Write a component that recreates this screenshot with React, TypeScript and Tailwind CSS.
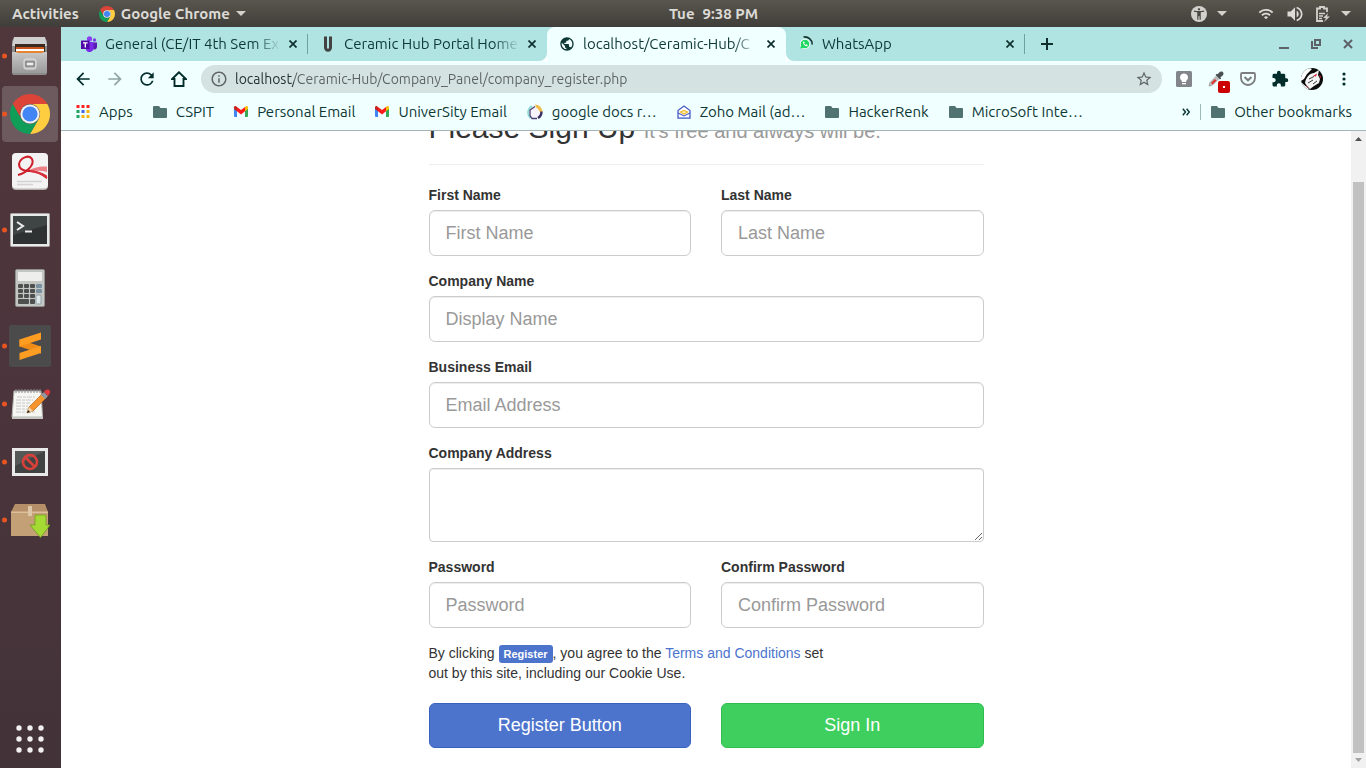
import React from "react";
import {
  MdAccessibilityNew,
  MdArrowBack,
  MdArrowForward,
  MdExtension,
  MdOutlineInfo,
  MdPublic,
  MdRefresh,
  MdStarBorder,
  MdVolumeUp,
  MdWifi,
} from "react-icons/md";

type IconProps = { className?: string };

/* ---------- Icons ---------- */

function ChromeIcon({ className }: IconProps) {
  return (
    <svg viewBox="4 4 40 40" className={className} aria-hidden="true">
      <path fill="#db4437" d="M6.68 14A20 20 0 0 1 41.32 14L24 14A10 10 0 0 0 15.34 29Z" />
      <path fill="#ffcd40" d="M41.32 14A20 20 0 0 1 24 44L32.66 29A10 10 0 0 0 24 14Z" />
      <path fill="#0f9d58" d="M24 44A20 20 0 0 1 6.68 14L15.34 29A10 10 0 0 0 32.66 29Z" />
      <circle cx="24" cy="24" r="9.6" fill="#f1f1f1" />
      <circle cx="24" cy="24" r="7.6" fill="#4285f4" />
    </svg>
  );
}

function CaretDown() {
  return (
    <svg viewBox="0 0 10 5" className="h-[5px] w-2.5" aria-hidden="true">
      <path d="M0 0h10L5 5z" fill="#d3d1cc" />
    </svg>
  );
}

function FilesIcon() {
  return (
    <svg viewBox="0 0 40 40" className="size-10" aria-hidden="true">
      <defs>
        <linearGradient id="cabinet" x1="0" y1="0" x2="0" y2="1">
          <stop offset="0" stopColor="#c9c9c9" />
          <stop offset="1" stopColor="#9a9a9a" />
        </linearGradient>
      </defs>
      <path d="M4 2h31l2 3v32l-1 2H3l-1-2V5z" fill="#8c8c8c" />
      <path d="M4 1h31l2 9H2z" fill="#cfcfcf" />
      <rect x="5" y="8" width="30" height="11" fill="#3b2a20" />
      <rect x="6" y="11" width="28" height="3" fill="#c8541b" />
      <rect x="6" y="13" width="28" height="2" fill="#fff" />
      <rect x="6" y="15" width="28" height="3" fill="#e8832f" />
      <path d="M2 16h4l2 1h24l2-1h3v21H2z" fill="url(#cabinet)" />
      <rect x="14" y="23" width="12" height="10" rx="2" fill="#b9b9b9" stroke="#e4e4e4" />
      <rect x="16" y="26" width="8" height="4" fill="#eee" stroke="#666" />
    </svg>
  );
}

function PdfIcon() {
  return (
    <svg viewBox="0 0 40 40" className="size-10" aria-hidden="true">
      <rect x="2" y="2" width="36" height="36" rx="4" fill="#b5b0b0" />
      <rect x="2" y="1" width="36" height="35.500" rx="4" fill="#f3f3f3" />
      <path d="M16 20C23 15 31 14 37 14.500V20c-7-2-14-1-21 0z" fill="#ec8087" />
      <path d="M8 23C16 21 25 13 22 7 19 2 10 6 9 12c0 6 6 7 11 7 6 .5 11 2 17 7" fill="none" stroke="#cf1f2b" strokeWidth="2" />
      <path d="M20 18.500c6-.5 12 2 17 5V27c-5-4-10-7-17-7z" fill="#d9323d" />
      <path d="M7 29.500h25M7 32.500h16" stroke="#d2d2d2" strokeWidth="1.500" />
    </svg>
  );
}

function TerminalIcon() {
  return (
    <svg viewBox="0 0 40 34" className="h-[34px] w-10" aria-hidden="true">
      <rect x="0.500" y="0.500" width="39" height="33" rx="1" fill="#e9e9e9" stroke="#a7a7a7" />
      <rect x="3" y="3" width="34" height="28" fill="#2e3233" />
      <path d="M3 3h34v9L3 22z" fill="#4b5051" opacity=".6" />
      <path d="M7 9l6 4-6 4" fill="none" stroke="#eee" strokeWidth="2" />
      <path d="M15 18.500h7" stroke="#eee" strokeWidth="2" />
    </svg>
  );
}

function CalculatorIcon() {
  const cols = [3, 9, 15];
  const rows = [15, 20, 25];
  return (
    <svg viewBox="0 0 30 38" className="h-[38px] w-[30px]" aria-hidden="true">
      <rect x="0.500" y="0.500" width="29" height="37" rx="1.500" fill="#c4c6c4" stroke="#8f918f" />
      <rect x="3" y="3" width="24" height="9" rx="1" fill="#eeefec" />
      {rows.map((y) =>
        cols.map((x) => <rect key={`${x}-${y}`} x={x} y={y} width="5" height="4" rx="1" fill="#4e5050" />),
      )}
      <rect x="3" y="30" width="11" height="5" rx="1" fill="#4e5050" />
      <rect x="15" y="30" width="5" height="5" rx="1" fill="#4e5050" />
      <rect x="21" y="15" width="6" height="4" rx="1" fill="#7890a0" />
      <rect x="21" y="20" width="6" height="4" rx="1" fill="#7890a0" />
      <rect x="21" y="26" width="5" height="9" rx="1" fill="#dde6ea" stroke="#8fa0a8" />
    </svg>
  );
}

function SublimeIcon() {
  return (
    <svg viewBox="0 0 42 42" className="size-[42px]" aria-hidden="true">
      <rect width="42" height="42" rx="2" fill="#4b4b4b" />
      <path d="M10.500 14.500L32 21.500V28.500L10.500 21.500z" fill="#f08c16" />
      <path d="M32 7.500L10.500 14.500V21.500L32 14.500z" fill="#ff9c22" />
      <path d="M32 21L10.500 28V35L32 28z" fill="#ff9c22" />
    </svg>
  );
}

function NotesIcon() {
  return (
    <svg viewBox="0 0 40 36" className="h-9 w-10" aria-hidden="true">
      <path d="M4 5h27l1.500 26H2z" fill="#f6f6f3" stroke="#b4b4b0" />
      <path d="M2 31h31v2H2z" fill="#c6c6c2" />
      <path d="M6 3v4M9 3v4M12 3v4M15 3v4M18 3v4M21 3v4M24 3v4M27 3v4M30 3v4" stroke="#8a8a8a" />
      <path
        d="M7 11h18M6 14h17M6 17h14M6 20h12M6 23h12M6 26h20"
        stroke="#c2c2c2"
        strokeWidth=".9"
        strokeDasharray="5 1 3 1"
      />
      <path d="M17 27l2-6L33 7l4 4-14 14z" fill="#f5942c" stroke="#b5651d" strokeWidth=".7" />
      <path d="M17 27l2-6 4 4z" fill="#f1d6a8" />
      <path d="M17 27l1-3 2 2z" fill="#222" />
      <path d="M31 9l3-3 4 4-3 3z" fill="#8d98a3" />
      <path d="M34 6c2-4 7-3 6 1l-2 3z" fill="#e23a3a" />
    </svg>
  );
}

function BlockedIcon() {
  return (
    <svg viewBox="0 0 36 28" className="h-7 w-9" aria-hidden="true">
      <rect width="36" height="28" fill="#e9e9e9" />
      <rect x="3" y="3" width="30" height="22" fill="#414342" />
      <path d="M3 3h30L3 18z" fill="#565857" />
      <circle cx="18" cy="14" r="7" fill="none" stroke="#d9403a" strokeWidth="2.600" />
      <path d="M13 9l10 10" stroke="#d9403a" strokeWidth="2.600" />
    </svg>
  );
}

function PackageIcon() {
  return (
    <svg viewBox="0 0 40 36" className="h-9 w-10" aria-hidden="true">
      <path d="M5 2h30l3 8H1z" fill="#b58f68" />
      <path d="M1 10h37v24H1z" fill="#c4a077" />
      <path d="M1 9.500h37v1.500H1z" fill="#dcc09c" />
      <path d="M18 4h4v10h-4z" fill="#dcc7ab" />
      <path d="M25 13h11v10h4L30.500 35.500 20 23h5z" fill="#a5da35" stroke="#6f9d19" strokeWidth=".8" />
    </svg>
  );
}

function FolderIcon() {
  return (
    <svg viewBox="0 0 14 12" className="h-3 w-3.5" aria-hidden="true">
      <path d="M1 0h5l1.500 2H13a1 1 0 0 1 1 1v8a1 1 0 0 1-1 1H1a1 1 0 0 1-1-1V1a1 1 0 0 1 1-1z" fill="#507371" />
    </svg>
  );
}

function GmailIcon() {
  return (
    <svg viewBox="0 0 14 11" className="h-[11px] w-3.5" aria-hidden="true">
      <path d="M0 2v8a1 1 0 0 0 1 1h2V4z" fill="#4285f4" />
      <path d="M14 2v8a1 1 0 0 1-1 1h-2V4z" fill="#34a853" />
      <path d="M11 1l1-.8c.900-.6 2 0 2 1.100V3l-3 2.300z" fill="#fbbc04" />
      <path d="M3 1L2 .2C1.100-.4 0 .2 0 1.300V3l3 2.300z" fill="#c5221f" />
      <path d="M3 1l4 3.100L11 1v4.300L7 8.400 3 5.300z" fill="#ff1a1a" />
    </svg>
  );
}

function AppsIcon() {
  const colors = ["#f22", "#f22", "#f22", "#1fa463", "#4069e0", "#f6b50c", "#1fa463", "#f6b50c", "#f6b50c"];
  return (
    <svg viewBox="0 0 13 13" className="h-[13px] w-3.5" aria-hidden="true">
      {colors.map((color, i) => (
        <rect key={i} x={(i % 3) * 5} y={Math.floor(i / 3) * 5} width="3" height="3" fill={color} />
      ))}
    </svg>
  );
}

function DocsRingIcon() {
  return (
    <svg viewBox="0 0 16 16" className="size-4" aria-hidden="true">
      <path d="M5 2C0 5 0 11 3.500 14" fill="none" stroke="#8fdcd6" strokeWidth="1.800" />
      <path d="M9 3L5.500 3.500 3 6v6l2 2.500h5l3-3V8z" fill="#f7f4fb" />
      <path d="M8 2.500L3 6v5.500L5 14.500h5" fill="none" stroke="#4a3f73" strokeWidth="1.300" />
      <path d="M8 .5c4 0 7 3 7.500 7L13 8.500C12 6 11 4.500 9 3.500z" fill="#f0bd4a" />
      <path d="M14.500 7.500c0 3-1 5-3.500 6.500" fill="none" stroke="#3a2d63" strokeWidth="2.400" />
    </svg>
  );
}

function ZohoMailIcon() {
  return (
    <svg viewBox="0 0 14 14" className="size-3.5" aria-hidden="true">
      <path d="M1 5.500L7 1l6 4.500V13H1z" fill="#fff" stroke="#4a5fc4" strokeWidth="1.300" />
      <path d="M3.500 7L7 5.500 10.500 7 7 9z" fill="#fff6d8" stroke="#f0b92c" strokeWidth="1.200" />
      <path d="M1 8l6 3 6-3" fill="none" stroke="#4a5fc4" strokeWidth="1.100" />
      <path d="M2 12.500h10" stroke="#8fa2e8" />
    </svg>
  );
}

function TeamsIcon() {
  return (
    <svg viewBox="0 0 16 16" className="size-4" aria-hidden="true">
      <circle cx="13.500" cy="4" r="1.700" fill="#7b3fe4" />
      <circle cx="8.500" cy="2.800" r="2.600" fill="#8a3ff0" />
      <path d="M11 6.500h5v4.500a2.500 2.500 0 0 1-4 2z" fill="#5b1bb5" />
      <path d="M5 6h7.500v6a4 4 0 0 1-7.500 2z" fill="#7a2be8" />
      <rect y="4.500" width="8.500" height="8.500" rx=".6" fill="#5009a8" />
      <path d="M2 6.800h4.600M4.300 6.800v4.700" stroke="#fff" strokeWidth="1.300" />
    </svg>
  );
}

function MagnetIcon() {
  return (
    <svg viewBox="0 0 16 16" className="size-4" aria-hidden="true">
      <path d="M5.500.500v11a2.500 2.700 0 0 0 5 0V.5" fill="none" stroke="#424242" strokeWidth="3" />
    </svg>
  );
}

function WhatsAppLoadingIcon() {
  return (
    <svg viewBox="0 0 16 16" className="size-4" aria-hidden="true">
      <circle cx="7" cy="8" r="5" fill="#fff" />
      <circle cx="7" cy="8" r="4.300" fill="#1ed75f" />
      <path d="M2.300 12.600l.8-3 2.200 2.200z" fill="#1ed75f" />
      <path d="M5 6c0 2.500 2 4.500 4.300 4.300l.4-1.300-1.300-.7-.7.600A3 3 0 0 1 6.100 7.300l.6-.7L6.200 5.300z" fill="#fff" />
      <path d="M5.500 1A7.500 7.500 0 0 1 14.200 8.500" fill="none" stroke="#12302e" strokeWidth="1.600" />
    </svg>
  );
}

function CloseGlyph() {
  return (
    <svg viewBox="0 0 8 8" className="size-2" aria-hidden="true">
      <path d="M.5.500l7 7M7.500.500l-7 7" stroke="#0e2f2d" strokeWidth="1.700" />
    </svg>
  );
}

function HomeIcon() {
  return (
    <svg viewBox="0 0 16 16" className="size-4" aria-hidden="true">
      <path d="M8 1.300L1 8h2.500v7h9V8H15z" fill="none" stroke="#032d2b" strokeWidth="1.900" />
    </svg>
  );
}

function BulbIcon() {
  return (
    <svg viewBox="0 0 16 16" className="size-4" aria-hidden="true">
      <rect width="16" height="16" rx="1.500" fill="#82868b" />
      <path d="M8 2.500a4 4 0 0 0-2.200 7.300V11h4.400V9.800A4 4 0 0 0 8 2.500z" fill="#fff" />
      <rect x="6" y="12" width="4" height="1.300" fill="#fff" />
    </svg>
  );
}

function EyedropperIcon() {
  return (
    <svg viewBox="0 0 16 16" className="size-4" aria-hidden="true">
      <path d="M1 15l1-3.500L8 5.500l2.500 2.500-6 6z" fill="#c4c4c4" stroke="#8b8b8b" strokeWidth=".7" />
      <path d="M3 12l4-4 1.500 1.500-4 4z" fill="#e03030" />
      <path d="M7.500 4l4.500 4.500 1.200-1.200-.9-.9C15 4.500 16 3.500 15.300 1.800 14.300-.200 12 .400 10.500 2.300l-.9 1L8.700 2.700z" fill="#4a4f52" />
    </svg>
  );
}

function PocketIcon() {
  return (
    <svg viewBox="0 0 16 14" className="h-3.5 w-4" aria-hidden="true">
      <path d="M1 2.200C1 1.500 1.500 1 2.200 1h11.600c.7 0 1.200.5 1.200 1.200V6A7 7 0 0 1 1 6z" fill="none" stroke="#7d7d7d" strokeWidth="1.800" />
      <path d="M4.500 5L8 8.300 11.500 5" fill="none" stroke="#7d7d7d" strokeWidth="2" />
    </svg>
  );
}

function ProfileAvatar() {
  return (
    <svg viewBox="0 0 22 22" className="size-[22px]" aria-hidden="true">
      <defs>
        <clipPath id="avatar">
          <circle cx="11" cy="11" r="11" />
        </clipPath>
      </defs>
      <g clipPath="url(#avatar)">
        <rect width="22" height="22" fill="#0b0b0b" />
        <path d="M0 5C3 0 8-1 11 1L6 6 3 11l-3 2z" fill="#fff" />
        <path d="M4 15c1-6 5-10 9-10l5-3-1 5 2 4-1 4-5 3-4 3-3-3z" fill="#f4f4f4" />
        <path d="M8 11l5-2.500M7 15l5-3M12 16l4-3" stroke="#222" strokeWidth=".9" />
        <path d="M12 8l4-2.500-1 3zM4 19l2.500-1 .5 1.500zM18 7l1.300 3.500.7-2z" fill="#e0203c" />
        <path d="M1 15l7 6-2 1-6-5z" fill="#fff" />
      </g>
    </svg>
  );
}

function BatteryIcon() {
  return (
    <svg viewBox="0 0 14 16" className="h-4 w-3.5" aria-hidden="true">
      <path d="M7 15H1V2.500h3V1h4v1.500h3V6" fill="none" stroke="#d3d1cc" strokeWidth="1.800" />
      <path d="M3 7.500h6M3 10h4M3 12.500h3" stroke="#d3d1cc" strokeWidth="1.500" />
      <path d="M12 7l-5 5h3l-2 4 6-5.500h-3z" fill="#d3d1cc" />
    </svg>
  );
}

/* ---------- Desktop shell ---------- */

function TopBar() {
  return (
    <header className="grid h-[27px] shrink-0 grid-cols-[61px_1fr_auto_1fr] items-center bg-linear-to-b from-[#59564e] to-[#403e3a] font-bold text-[#dcdad5]">
      <div className="col-span-2 flex items-center gap-5 pl-3">
        <button type="button">Activities</button>
        <button type="button" className="flex items-center gap-1.5">
          <ChromeIcon className="size-4" />
          Google Chrome
          <CaretDown />
        </button>
      </div>
      <time className="flex gap-2">
        <span>Tue</span>
        <span>9:38 PM</span>
      </time>
      <div className="flex items-center justify-end gap-[11px] pr-[15px]">
        <button type="button" aria-label="Accessibility" className="mr-5 flex items-center gap-2.5">
          <span className="flex size-4 items-center justify-center rounded-full bg-[#d3d1cc] text-[#4a4842]">
            <MdAccessibilityNew className="size-3.5" />
          </span>
          <CaretDown />
        </button>
        <MdWifi className="size-4" />
        <MdVolumeUp className="size-5" />
        <BatteryIcon />
        <CaretDown />
      </div>
    </header>
  );
}

const launchers: { name: string; icon: React.ReactNode; running?: boolean; active?: boolean }[] = [
  { name: "Files", icon: <FilesIcon />, running: true },
  { name: "Google Chrome", icon: <ChromeIcon className="size-10" />, running: true, active: true },
  { name: "Document Viewer", icon: <PdfIcon /> },
  { name: "Terminal", icon: <TerminalIcon />, running: true },
  { name: "Calculator", icon: <CalculatorIcon /> },
  { name: "Sublime Text", icon: <SublimeIcon />, running: true },
  { name: "Text Editor", icon: <NotesIcon />, running: true },
  { name: "Screen Blocker", icon: <BlockedIcon />, running: true },
  { name: "Package Installer", icon: <PackageIcon />, running: true },
];

function Dock() {
  return (
    <nav
      aria-label="Dock"
      className="flex w-[61px] shrink-0 flex-col gap-0.5 bg-linear-to-b from-[#50373b] via-[#4b343c] to-[#423338] py-px pl-0.5"
    >
      {launchers.map(({ name, icon, running, active }) => (
        <button
          key={name}
          type="button"
          aria-label={name}
          className={`relative flex size-14 shrink-0 items-center justify-center rounded ${active ? "bg-[#6d5a5e]" : ""}`}
        >
          {running && <span className="absolute top-1/2 left-0 size-[5px] -translate-y-1/2 rounded-full bg-[#e95420]" />}
          {icon}
        </button>
      ))}
      <button type="button" aria-label="Show Applications" className="mt-auto flex size-14 items-center justify-center">
        <svg viewBox="0 0 28 28" className="size-7" aria-hidden="true">
          {[3, 14, 25].map((y) => [3, 14, 25].map((x) => <circle key={`${x}-${y}`} cx={x} cy={y} r="2.700" fill="#f2f0f0" />))}
        </svg>
      </button>
    </nav>
  );
}

/* ---------- Browser chrome ---------- */

function Tab({ icon, title, active }: { icon: React.ReactNode; title: string; active?: boolean }) {
  return (
    <div
      className={`flex h-full w-[239px] items-center gap-2 pr-[11px] pl-3 ${active ? "rounded-t-lg bg-[#f0ffff]" : ""}`}
    >
      {icon}
      <span className="min-w-0 flex-1 overflow-hidden mask-r-from-85% whitespace-nowrap">{title}</span>
      <button type="button" aria-label={`Close ${title}`}>
        <CloseGlyph />
      </button>
    </div>
  );
}

function TabStrip() {
  return (
    <div className="flex h-[34px] shrink-0 text-[#0d3835]">
      <div className="flex items-center rounded-br-lg bg-[#b0e4e2] pl-2">
        <Tab icon={<TeamsIcon />} title="General (CE/IT 4th Sem Ex" />
        <span className="-ml-px h-5 w-px bg-[#6da09e]" />
        <Tab icon={<MagnetIcon />} title="Ceramic Hub Portal Home" />
      </div>
      <div className="bg-[#b0e4e2]">
        <Tab active icon={<MdPublic className="size-4" />} title="localhost/Ceramic-Hub/C" />
      </div>
      <div className="flex flex-1 items-center rounded-bl-lg bg-[#b0e4e2]">
        <Tab icon={<WhatsAppLoadingIcon />} title="WhatsApp" />
        <span className="-ml-px h-5 w-px bg-[#6da09e]" />
        <button type="button" aria-label="New tab" className="ml-4">
          <svg viewBox="0 0 12 12" className="size-3" aria-hidden="true">
            <path d="M6 0v12M0 6h12" stroke="#0e2f2d" strokeWidth="2" />
          </svg>
        </button>
        <div className="ml-auto flex items-center gap-[22px] pr-[13px]">
          <button type="button" aria-label="Minimize">
            <svg viewBox="0 0 10 10" className="size-2.5" aria-hidden="true">
              <path d="M0 9h10" stroke="#5c6268" strokeWidth="2" />
            </svg>
          </button>
          <button type="button" aria-label="Restore">
            <svg viewBox="0 0 10 10" className="size-2.5" aria-hidden="true">
              <path d="M4 1h5v5H4zM1 2v7h6" fill="none" stroke="#5c6268" strokeWidth="2" />
            </svg>
          </button>
          <button type="button" aria-label="Close window">
            <svg viewBox="0 0 10 10" className="size-2.5" aria-hidden="true">
              <path d="M1 1l8 8M9 1L1 9" stroke="#5c6268" strokeWidth="2" />
            </svg>
          </button>
        </div>
      </div>
    </div>
  );
}

function ToolButton({ label, children }: { label: string; children: React.ReactNode }) {
  return (
    <button
      type="button"
      aria-label={label}
      className="relative flex size-8 shrink-0 items-center justify-center text-[#032d2b]"
    >
      {children}
    </button>
  );
}

function Toolbar() {
  return (
    <div className="flex h-9 shrink-0 items-center bg-[#f0ffff] px-1.5">
      <ToolButton label="Back">
        <MdArrowBack className="size-5" />
      </ToolButton>
      <ToolButton label="Forward">
        <MdArrowForward className="size-5 text-[#8fa5a4]" />
      </ToolButton>
      <ToolButton label="Reload">
        <MdRefresh className="size-5" />
      </ToolButton>
      <ToolButton label="Home">
        <HomeIcon />
      </ToolButton>
      <div className="mx-1.5 flex h-7 flex-1 items-center gap-[7px] rounded-full bg-[#d5e2e2] px-[9px] text-[#5f6566]">
        <MdOutlineInfo className="size-[18px] shrink-0" />
        <input
          aria-label="Address"
          defaultValue="localhost/Ceramic-Hub/Company_Panel/company_register.php"
          className="min-w-0 flex-1 bg-[linear-gradient(90deg,#1d2f2e_59px,#5a6162_59px)] bg-clip-text text-sm text-transparent outline-none"
        />
        <MdStarBorder className="size-[18px] shrink-0" />
      </div>
      <ToolButton label="Keep">
        <BulbIcon />
      </ToolButton>
      <ToolButton label="Color picker">
        <EyedropperIcon />
        <span className="absolute right-0.5 bottom-0.5 flex size-3 items-center justify-center rounded-xs bg-[#cc0000]">
          <span className="size-0.5 bg-white" />
        </span>
      </ToolButton>
      <ToolButton label="Save to Pocket">
        <PocketIcon />
      </ToolButton>
      <ToolButton label="Extensions">
        <MdExtension className="size-[18px]" />
      </ToolButton>
      <ToolButton label="Profile">
        <ProfileAvatar />
      </ToolButton>
      <ToolButton label="Menu">
        <svg viewBox="0 0 4 14" className="h-3.5 w-1" aria-hidden="true">
          <circle cx="2" cy="2" r="1.600" fill="currentColor" />
          <circle cx="2" cy="7" r="1.600" fill="currentColor" />
          <circle cx="2" cy="12" r="1.600" fill="currentColor" />
        </svg>
      </ToolButton>
    </div>
  );
}

const bookmarks = [
  { icon: <AppsIcon />, name: "Apps" },
  { icon: <FolderIcon />, name: "CSPIT" },
  { icon: <GmailIcon />, name: "Personal Email" },
  { icon: <GmailIcon />, name: "UniverSity Email" },
  { icon: <DocsRingIcon />, name: "google docs r…" },
  { icon: <ZohoMailIcon />, name: "Zoho Mail (ad…" },
  { icon: <FolderIcon />, name: "HackerRenk" },
  { icon: <FolderIcon />, name: "MicroSoft Inte…" },
];

function BookmarksBar() {
  return (
    <div className="flex h-[34px] shrink-0 items-center border-b border-[#a3b5b5] bg-[#f0ffff] pr-3.5 pb-1 pl-[15px] whitespace-nowrap text-[#0d3835]">
      <div className="flex items-center gap-5">
        {bookmarks.map(({ icon, name }) => (
          <a key={name} href="#" className="flex items-center gap-[9px]">
            {icon}
            {name}
          </a>
        ))}
      </div>
      <div className="ml-auto flex items-center gap-2.5">
        <button type="button" aria-label="More bookmarks">
          <svg viewBox="0 0 8 8" className="size-2" aria-hidden="true">
            <path d="M.8.800L3.500 4 .8 7.200M4.600.800L7.300 4 4.600 7.200" fill="none" stroke="#0d3835" strokeWidth="1.500" />
          </svg>
        </button>
        <span className="h-4 w-px bg-[#9db8b7]" />
        <a href="#" className="flex items-center gap-[9px]">
          <FolderIcon />
          Other bookmarks
        </a>
      </div>
    </div>
  );
}

/* ---------- Sign-up page ---------- */

function Field({ id, label, placeholder, type = "text" }: { id: string; label: string; placeholder: string; type?: string }) {
  return (
    <div>
      <label htmlFor={id} className="mb-[5px] block font-bold">
        {label}
      </label>
      <input
        id={id}
        type={type}
        placeholder={placeholder}
        className="block h-[46px] w-full rounded-md border border-[#ccc] bg-white px-4 text-lg shadow-[inset_0_1px_1px_rgba(0,0,0,0.075)] placeholder:text-[#999]"
      />
    </div>
  );
}

function SignUpForm() {
  return (
    <form className="mx-auto w-full max-w-[555px] shrink-0 font-['Liberation_Sans',Arial,sans-serif] text-sm leading-5 text-[#333]">
      <h2 className="mb-5 text-3xl leading-[33px]">
        Please Sign Up <small className="text-xl leading-none text-[#999]">It's free and always will be.</small>
      </h2>
      <hr className="mb-5 border-[#eee]" />
      <div className="flex flex-col gap-[15px]">
        <div className="grid grid-cols-2 gap-[30px]">
          <Field id="first-name" label="First Name" placeholder="First Name" />
          <Field id="last-name" label="Last Name" placeholder="Last Name" />
        </div>
        <Field id="company-name" label="Company Name" placeholder="Display Name" />
        <Field id="email" label="Business Email" placeholder="Email Address" type="email" />
        <div>
          <label htmlFor="address" className="mb-[5px] block font-bold">
            Company Address
          </label>
          <textarea
            id="address"
            className="block h-[74px] w-full rounded border border-[#ccc] px-3 py-1.5 shadow-[inset_0_1px_1px_rgba(0,0,0,0.075)]"
          />
        </div>
        <div className="grid grid-cols-2 gap-[30px]">
          <Field id="password" label="Password" placeholder="Password" type="password" />
          <Field id="confirm-password" label="Confirm Password" placeholder="Confirm Password" type="password" />
        </div>
        <p className="max-w-[409px]">
          By clicking{" "}
          <strong className="rounded-[3px] bg-[#4c74cd] px-[5px] py-[3px] text-[11px] leading-none text-white">Register</strong>
          , you agree to the{" "}
          <a href="#" className="text-[#4c74cd]">
            Terms and Conditions
          </a>{" "}
          set out by this site, including our Cookie Use.
        </p>
      </div>
      <div className="mt-5 grid grid-cols-2 gap-[30px] text-lg text-white">
        <button type="button" className="h-[45px] rounded-md border border-[#3a62bd] bg-[#4c74cd] pb-0.5">
          Register Button
        </button>
        <button type="button" className="h-[45px] rounded-md border border-[#2ebd4e] bg-[#3fcf5e] pb-0.5">
          Sign In
        </button>
      </div>
    </form>
  );
}

function Scrollbar() {
  return (
    <div className="flex w-[15px] shrink-0 flex-col items-center bg-[#f1f1f1]" aria-hidden="true">
      <svg viewBox="0 0 15 15" className="size-[15px]">
        <path d="M4 10h7L7.500 6z" fill="#505050" />
      </svg>
      <div className="mt-9 w-[11px] flex-1 bg-[#c1c1c1]" />
      <svg viewBox="0 0 15 15" className="size-[15px]">
        <path d="M4 5h7L7.500 9z" fill="#a3a3a3" />
      </svg>
    </div>
  );
}

export default function App() {
  return (
    <div className="flex h-screen flex-col overflow-hidden font-['Ubuntu','Noto_Sans',sans-serif] text-[15px] leading-5">
      <TopBar />
      <div className="flex min-h-0 flex-1">
        <Dock />
        <div className="flex min-w-0 flex-1 flex-col">
          <TabStrip />
          <Toolbar />
          <BookmarksBar />
          <div className="flex min-h-0 flex-1">
            <main className="flex min-w-0 flex-1 flex-col justify-end overflow-hidden bg-white pb-5">
              <SignUpForm />
            </main>
            <Scrollbar />
          </div>
        </div>
      </div>
    </div>
  );
}
